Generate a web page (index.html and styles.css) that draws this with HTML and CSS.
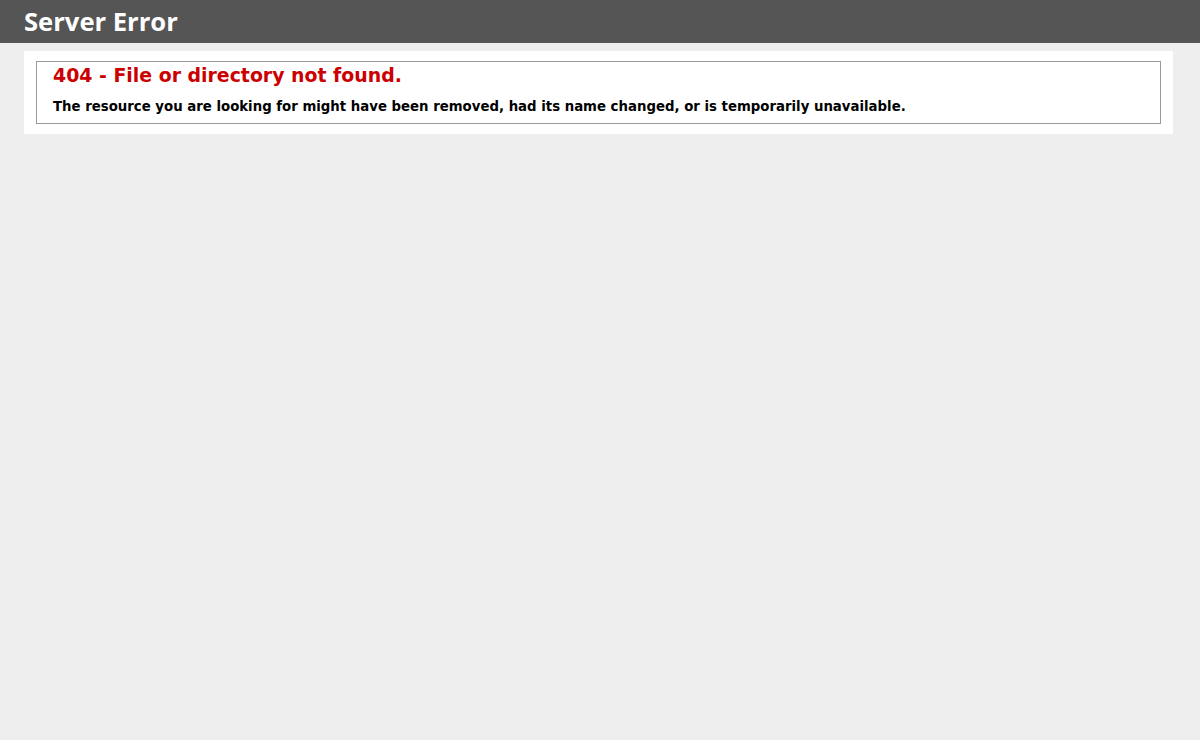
FILE: index.html
```
<!DOCTYPE html>
<html>
<head>
<meta charset="utf-8">
<title>404 - File or directory not found.</title>
<link rel="stylesheet" href="styles.css">
</head>
<body>
<div class="header"><h1>Server Error</h1></div>
<div class="content">
  <div class="content-container">
    <fieldset>
      <h2>404 - File or directory not found.</h2>
      <h3>The resource you are looking for might have been removed, had its name changed, or is temporarily unavailable.</h3>
    </fieldset>
  </div>
</div>
</body>
</html>
```
FILE: styles.css
```
body {
  margin: 0;
  font-size: 11.2px;
  font-family: Verdana, "DejaVu Sans", sans-serif;
  background: #eeeeee;
}
.header {
  width: 96%;
  padding: 6px 2%;
  font-family: "Trebuchet MS", "Open Sans", sans-serif;
  color: #fff;
  background-color: #555555;
}
h1 {
  font-size: 25.6px;
  line-height: 31px;
  margin: 0;
  color: #fff;
  font-weight: bold;
}
.content {
  margin: 0 0 0 2%;
}
.content-container {
  background: #fff;
  width: 96%;
  margin-top: 8px;
  padding: 10px;
}
fieldset {
  margin: 0 2px;
  padding: 2px 16px 8px 16px;
  border: 1px solid #9a9a9a;
}
h2 {
  font-size: 18.9px;
  line-height: 23px;
  margin: 0;
  color: #cc0000;
}
h3 {
  font-size: 13.3px;
  line-height: 16px;
  margin: 12px 0 0 0;
  color: #000;
}
```
